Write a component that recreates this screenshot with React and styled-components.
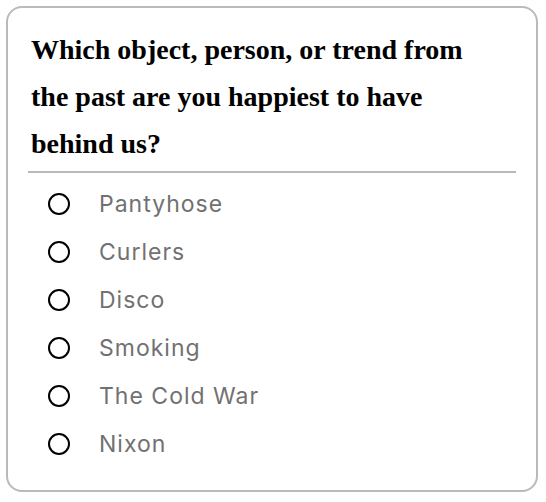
import React from "react";
import styled, { createGlobalStyle } from "styled-components";

const Global = createGlobalStyle`
  html, body { margin: 0; padding: 0; background: #fff; }
  body { padding: 6px 0 0 6px; }
`;

const Card = styled.div`
  box-sizing: border-box;
  width: 532px;
  height: 486px;
  border: 2px solid #bdb9b6;
  border-radius: 16px;
  padding: 18px 20px 0 20px;
  background: #fff;
`;

const Question = styled.h2`
  margin: 0;
  padding: 0 0 0 3px;
  max-width: 450px;
  font-family: "Liberation Serif", serif;
  font-weight: 700;
  font-size: 28px;
  line-height: 47px;
  color: #000;
`;

const Divider = styled.hr`
  margin: 4px 0 0 0;
  border: none;
  height: 2px;
  background: #bdb9b6;
`;

const Options = styled.div`
  display: flex;
  flex-direction: column;
  padding: 7px 0 0 20px;
`;

const Option = styled.label`
  display: flex;
  align-items: center;
  height: 48px;
  gap: 29px;
  cursor: pointer;
`;

const Radio = styled.span`
  box-sizing: border-box;
  width: 22px;
  height: 22px;
  border: 2px solid #000;
  border-radius: 50%;
  flex: none;
`;

const Label = styled.span`
  font-family: Inter, sans-serif;
  font-size: 23px;
  letter-spacing: 1px;
  color: #717171;
`;

const items = ["Pantyhose", "Curlers", "Disco", "Smoking", "The Cold War", "Nixon"];

export default function App() {
  return (
    <>
      <Global />
      <Card>
        <Question>
          Which object, person, or trend from the past are you happiest to have behind us?
        </Question>
        <Divider />
        <Options>
          {items.map((t) => (
            <Option key={t}>
              <Radio />
              <Label>{t}</Label>
            </Option>
          ))}
        </Options>
      </Card>
    </>
  );
}
